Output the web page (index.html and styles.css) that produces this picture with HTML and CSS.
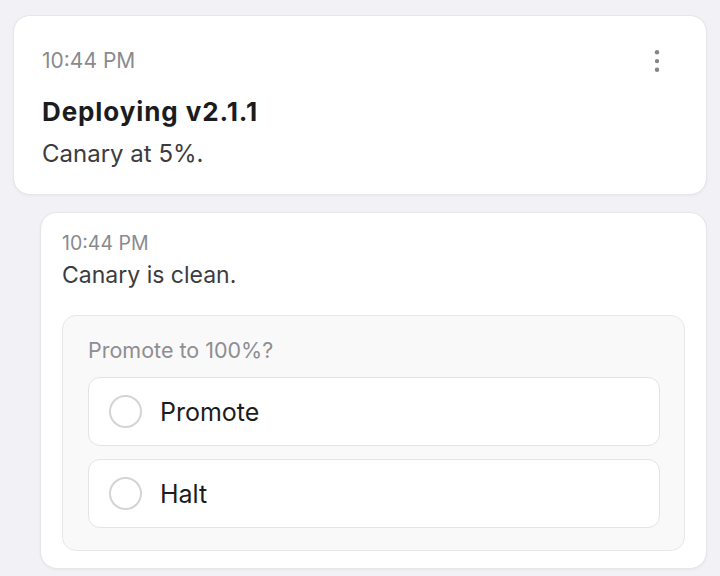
FILE: index.html
```html
<!DOCTYPE html>
<html lang="en">
<head>
<meta charset="utf-8">
<title>Deploy</title>
<link rel="stylesheet" href="styles.css">
</head>
<body>
<main class="feed">
  <article class="card card-main">
    <header class="card-head">
      <span class="time time-lg">10:44 PM</span>
      <button class="kebab" aria-label="More">
        <svg width="6" height="24" viewBox="0 0 6 24"><circle cx="3" cy="3.3" r="2.2"/><circle cx="3" cy="12.1" r="2.2"/><circle cx="3" cy="20.8" r="2.2"/></svg>
      </button>
    </header>
    <h1 class="title">Deploying v2.1.1</h1>
    <p class="body body-main">Canary at 5%.</p>
  </article>
  <article class="card card-reply">
    <span class="time time-sm">10:44 PM</span>
    <p class="body body-reply">Canary is clean.</p>
    <section class="poll">
      <div class="poll-q">Promote to 100%?</div>
      <div class="options">
        <label class="option"><span class="radio"></span><span class="opt-text">Promote</span></label>
        <label class="option"><span class="radio"></span><span class="opt-text">Halt</span></label>
      </div>
    </section>
  </article>
</main>
</body>
</html>
```

FILE: styles.css
```css
* { box-sizing: border-box; }
html, body { margin: 0; padding: 0; }
body {
  background: #f2f2f6;
  font-family: Inter, "Noto Sans", "Liberation Sans", sans-serif;
  width: 720px;
  height: 576px;
  overflow: hidden;
}
.feed {
  padding: 15px 13px 0 13px;
  display: flex;
  flex-direction: column;
  gap: 17px;
}
.card {
  background: #ffffff;
  border: 1px solid #e6e6ea;
  border-radius: 17px;
  box-shadow: 0 1px 3px rgba(0, 0, 0, 0.05);
}
.card-main {
  padding: 33px 28px 25px 28px;
  display: flex;
  flex-direction: column;
}
.card-head {
  display: flex;
  align-items: center;
  justify-content: space-between;
  height: 24px;
}
.time {
  color: #8a8a8e;
  display: block;
}
.time-lg { font-size: 21px; line-height: 24px; }
.time-sm { font-size: 19.5px; line-height: 24px; }
.kebab {
  border: 0;
  background: none;
  padding: 0;
  width: 44px;
  height: 30px;
  margin-right: -1px;
  display: flex;
  align-items: center;
  justify-content: center;
  fill: #858589;
}
.title {
  margin: 23px 0 0 0;
  font-size: 26px;
  line-height: 32px;
  font-weight: 700;
  color: #1c1c1e;
  letter-spacing: 0.9px;
}
.body {
  margin: 0;
  color: #3c3c40;
}
.body-main {
  margin-top: 11px;
  font-size: 24px;
  line-height: 30px;
}
.card-reply {
  margin-left: 27px;
  padding: 18px 21px 17px 21px;
}
.body-reply {
  margin-top: 6px;
  font-size: 23px;
  line-height: 28px;
}
.poll {
  margin-top: 26px;
  background: #f9f9f9;
  border: 1px solid #e8e8e8;
  border-radius: 14px;
  padding: 22px 24px 22px 25px;
}
.poll-q {
  font-size: 21.5px;
  line-height: 24px;
  color: #8e8e93;
}
.options {
  margin-top: 15px;
  display: flex;
  flex-direction: column;
  gap: 13px;
}
.option {
  height: 69px;
  background: #ffffff;
  border: 1px solid #e4e4e6;
  border-radius: 12px;
  display: flex;
  align-items: center;
  padding-left: 20px;
  gap: 18px;
}
.radio {
  width: 33px;
  height: 33px;
  border-radius: 50%;
  border: 2.5px solid #d4d4d8;
  flex: none;
}
.opt-text {
  font-size: 25px;
  line-height: 30px;
  color: #1c1c1e;
}
```
